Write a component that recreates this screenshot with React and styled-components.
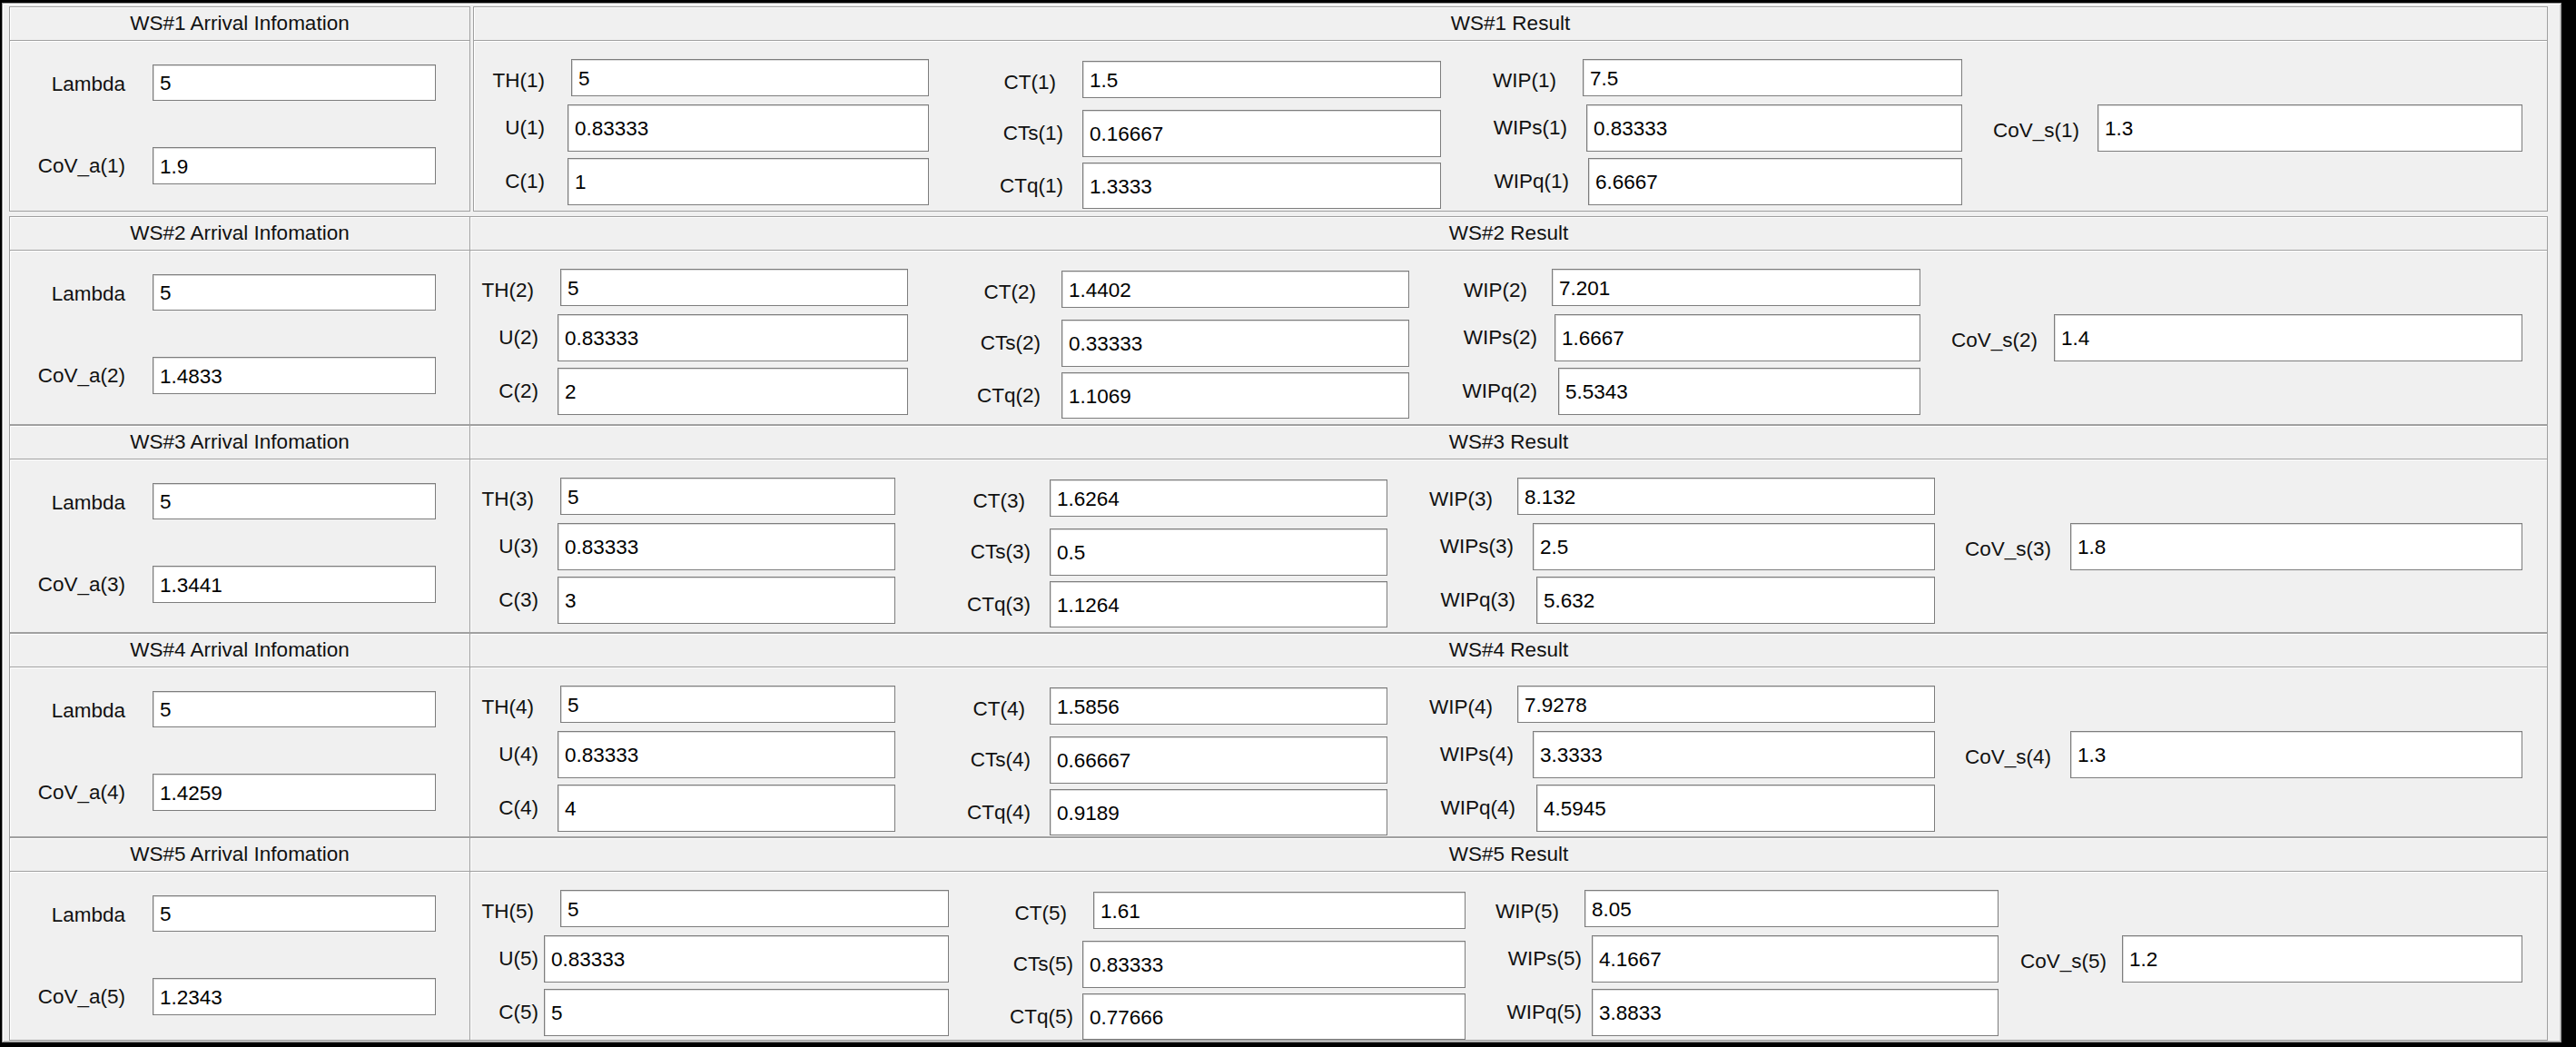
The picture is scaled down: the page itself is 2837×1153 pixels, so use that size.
import React from 'react';
import styled, { createGlobalStyle } from 'styled-components';

const Global = createGlobalStyle`
  html, body { margin: 0; padding: 0; background: #000; }
  body { font-family: "Liberation Sans", Arial, sans-serif; color: #000; }
  * { box-sizing: border-box; }
`;

const Window = styled.div`
  margin: 3px 0 0 2px;
  width: 2819px;
  height: 1145px;
  background: #f0f0f0;
  border: 1px solid #9a9a9a;
  box-shadow: inset 1px 1px 0 #ffffff, inset -1px -1px 0 #c8c8c8;
  padding: 3px 0 0 7px;
  display: flex;
  flex-direction: column;
`;

const Section = styled.div`
  display: flex;
  width: 2796px;
  height: ${(p) => p.$h}px;
  margin-bottom: ${(p) => p.$mb || 0}px;
  flex: none;
`;

const Panel = styled.div`
  display: flex;
  flex-direction: column;
  height: 100%;
  width: ${(p) => p.$w}px;
  margin-left: ${(p) => p.$ml || 0}px;
  border: 1px solid #a0a0a0;
  ${(p) => (p.$noLeft ? 'border-left: none;' : '')}
  box-shadow: inset 1px 1px 0 #ffffff;
  flex: none;
`;

const Header = styled.div`
  height: 37px;
  flex: none;
  border-bottom: 1px solid #a0a0a0;
  box-shadow: 0 1px 0 #ffffff;
  display: flex;
  align-items: center;
  justify-content: center;
  font-size: 22.5px;
  color: #111;
  padding-bottom: 1px;
`;

const LeftBody = styled.div`
  flex: 1;
  display: flex;
  flex-direction: column;
  padding-top: 26px;
`;

const ResultBody = styled.div`
  flex: 1;
  display: grid;
  grid-template-columns: ${(p) => p.$cols};
  align-items: start;
`;

const Column = styled.div`
  display: flex;
  flex-direction: column;
  padding-top: ${(p) => p.$pt}px;
`;

const FieldRow = styled.div`
  display: flex;
  align-items: center;
  height: ${(p) => p.$h}px;
  margin-top: ${(p) => p.$mt || 0}px;
  width: ${(p) => (p.$w ? `${p.$w}px` : 'auto')};
`;

const Label = styled.span`
  flex: 0 0 ${(p) => p.$lw}px;
  text-align: right;
  padding-right: ${(p) => p.$gap}px;
  font-size: 22.5px;
  color: #111;
  white-space: nowrap;
  padding-top: ${(p) => p.$low || 0}px;
`;

const Box = styled.input`
  flex: ${(p) => (p.$iw ? `0 0 ${p.$iw}px` : '1')};
  min-width: 0;
  height: 100%;
  border: 1px solid #7d7d7d;
  box-shadow: inset 1px 1px 0 #dcdcdc;
  background: #fff;
  font-family: "Liberation Sans", Arial, sans-serif;
  font-size: 22.5px;
  color: #000;
  padding: 2px 0 0 7px;
  outline: none;
  border-radius: 0;
  margin: 0;
`;

// vertical patterns (relative to body top): [top, height]
const PATTERN = {
  A: [[20, 41], [70, 52], [129, 52]],
  B: [[22, 41], [76, 52], [134, 51]],
  D: [[70, 52]],
};

const sections = [
  {
    n: 1, h: 226, mb: 5, split: true, lambda: '5', cova: '1.9',
    cols: [
      { w: 501, p: 'A', f: [['TH(1)', '5', 107, 29], ['U(1)', '0.83333', 103, 25], ['C(1)', '1', 103, 25]] },
      { w: 564, p: 'B', f: [['CT(1)', '1.5', 169, 29], ['CTs(1)', '0.16667', 169, 21], ['CTq(1)', '1.3333', 169, 21]] },
      { w: 574, p: 'A', f: [['WIP(1)', '7.5', 156, 29], ['WIPs(1)', '0.83333', 160, 21], ['WIPq(1)', '6.6667', 162, 21]] },
      { w: 617, p: 'D', f: [['CoV_s(1)', '1.3', 149, 20]] },
    ],
  },
  {
    n: 2, h: 230, lambda: '5', cova: '1.4833',
    cols: [
      { w: 482, p: 'A', f: [['TH(2)', '5', 99, 29], ['U(2)', '0.83333', 96, 21], ['C(2)', '2', 96, 21]] },
      { w: 552, p: 'B', f: [['CT(2)', '1.4402', 169, 28], ['CTs(2)', '0.33333', 169, 23], ['CTq(2)', '1.1069', 169, 23]] },
      { w: 563, p: 'A', f: [['WIP(2)', '7.201', 157, 27], ['WIPs(2)', '1.6667', 160, 19], ['WIPq(2)', '5.5343', 164, 23]] },
      { w: 663, p: 'D', f: [['CoV_s(2)', '1.4', 147, 18]] },
    ],
  },
  {
    n: 3, h: 229, lambda: '5', cova: '1.3441',
    cols: [
      { w: 468, p: 'A', f: [['TH(3)', '5', 99, 29], ['U(3)', '0.83333', 96, 21], ['C(3)', '3', 96, 21]] },
      { w: 542, p: 'B', f: [['CT(3)', '1.6264', 170, 27], ['CTs(3)', '0.5', 170, 21], ['CTq(3)', '1.1264', 170, 21]] },
      { w: 603, p: 'A', f: [['WIP(3)', '8.132', 143, 27], ['WIPs(3)', '2.5', 160, 21], ['WIPq(3)', '5.632', 164, 23]] },
      { w: 647, p: 'D', f: [['CoV_s(3)', '1.8', 149, 21]] },
    ],
  },
  {
    n: 4, h: 225, lambda: '5', cova: '1.4259',
    cols: [
      { w: 468, p: 'A', f: [['TH(4)', '5', 99, 29], ['U(4)', '0.83333', 96, 21], ['C(4)', '4', 96, 21]] },
      { w: 542, p: 'B', f: [['CT(4)', '1.5856', 170, 27], ['CTs(4)', '0.66667', 170, 21], ['CTq(4)', '0.9189', 170, 21]] },
      { w: 603, p: 'A', f: [['WIP(4)', '7.9278', 143, 27], ['WIPs(4)', '3.3333', 160, 21], ['WIPq(4)', '4.5945', 164, 23]] },
      { w: 647, p: 'D', f: [['CoV_s(4)', '1.3', 149, 21]] },
    ],
  },
  {
    n: 5, h: 224, lambda: '5', cova: '1.2343',
    cols: [
      { w: 527, p: 'A', f: [['TH(5)', '5', 99, 29], ['U(5)', '0.83333', 81, 6], ['C(5)', '5', 81, 6]] },
      { w: 569, p: 'B', f: [['CT(5)', '1.61', 159, 29], ['CTs(5)', '0.83333', 147, 10], ['CTq(5)', '0.77666', 147, 10]] },
      { w: 587, p: 'A', f: [['WIP(5)', '8.05', 131, 28], ['WIPs(5)', '4.1667', 139, 11], ['WIPq(5)', '3.8833', 139, 11]] },
      { w: 577, p: 'D', f: [['CoV_s(5)', '1.2', 136, 17]] },
    ],
  },
];

function ResultColumn({ col }) {
  const pat = PATTERN[col.p];
  return (
    <Column $pt={pat[0][0]}>
      {col.f.map(([label, value, lw, gap], i) => {
        const [top, h] = pat[i];
        const mt = i === 0 ? 0 : top - (pat[i - 1][0] + pat[i - 1][1]);
        return (
          <FieldRow key={label} $h={h} $mt={mt}>
            <Label $lw={lw} $gap={gap} $low={i === 0 ? 6 : 0}>{label}</Label>
            <Box readOnly defaultValue={value} />
          </FieldRow>
        );
      })}
    </Column>
  );
}

function StationSection({ s }) {
  const cols = s.cols.map((c) => `${c.w}px`).join(' ') + ' 1fr';
  return (
    <Section $h={s.h} $mb={s.mb}>
      <Panel $w={508}>
        <Header>{`WS#${s.n} Arrival Infomation`}</Header>
        <LeftBody>
          <FieldRow $h={40} $w={469}>
            <Label $lw={157} $gap={30} $low={4}>Lambda</Label>
            <Box readOnly defaultValue={s.lambda} />
          </FieldRow>
          <FieldRow $h={41} $mt={51} $w={469}>
            <Label $lw={157} $gap={30}>{`CoV_a(${s.n})`}</Label>
            <Box readOnly defaultValue={s.cova} />
          </FieldRow>
        </LeftBody>
      </Panel>
      <Panel $w={s.split ? 2285 : 2288} $ml={s.split ? 3 : 0} $noLeft={!s.split}>
        <Header>{`WS#${s.n} Result`}</Header>
        <ResultBody $cols={cols}>
          {s.cols.map((c, i) => (
            <ResultColumn key={i} col={c} />
          ))}
        </ResultBody>
      </Panel>
    </Section>
  );
}

export default function App() {
  return (
    <>
      <Global />
      <Window>
        {sections.map((s) => (
          <StationSection key={s.n} s={s} />
        ))}
      </Window>
    </>
  );
}
